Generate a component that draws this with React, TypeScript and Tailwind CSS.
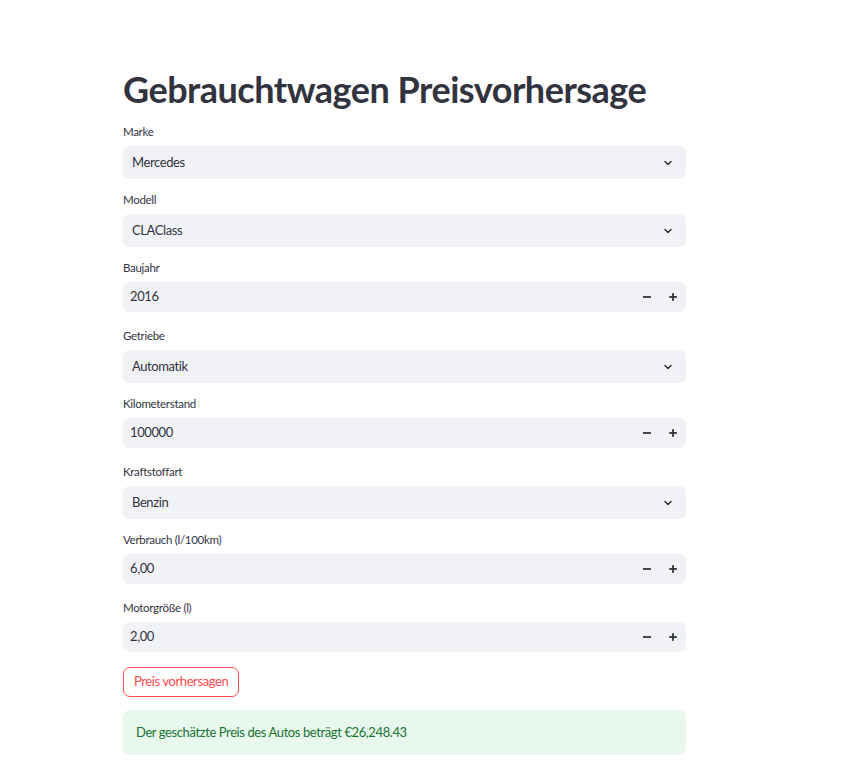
import React from "react";

const font = { fontFamily: "Lato, 'Noto Sans', 'Liberation Sans', sans-serif" };

function Chevron() {
  return (
    <svg width="12" height="12" viewBox="0 0 24 24" fill="none" stroke="#31333F" strokeWidth="3.2" strokeLinecap="round" strokeLinejoin="round">
      <path d="M6 9l6 6 6-6" />
    </svg>
  );
}

function SelectBox({ label, value }: { label: string; value: string }) {
  return (
    <div className="flex flex-col">
      <div className="h-[16px] text-[11.5px] leading-[16px] tracking-[-0.3px] text-[#31333F]">{label}</div>
      <div className="mt-[6px] h-[33px] rounded-[7px] bg-[#F0F2F6] flex items-center justify-between pl-[9px] pr-[12px]">
        <span className="text-[13px] tracking-[-0.4px] text-[#31333F]">{value}</span>
        <Chevron />
      </div>
    </div>
  );
}

function NumberBox({ label, value }: { label: string; value: string }) {
  return (
    <div className="flex flex-col">
      <div className="h-[16px] text-[11.5px] leading-[16px] tracking-[-0.3px] text-[#31333F]">{label}</div>
      <div className="mt-[6px] h-[33px]">
        <div className="h-[30px] rounded-[7px] bg-[#F0F2F6] flex items-center justify-between pl-[7px]">
          <span className="text-[13px] tracking-[-0.4px] text-[#31333F]">{value}</span>
          <div className="flex items-center h-full">
            <div className="w-[26px] h-full flex items-center justify-center">
              <svg width="10" height="10" viewBox="0 0 10 10"><rect x="1" y="4.1" width="8" height="1.8" fill="#31333F" /></svg>
            </div>
            <div className="w-[26px] h-full flex items-center justify-center">
              <svg width="10" height="10" viewBox="0 0 10 10"><rect x="1.2" y="4.1" width="7.6" height="1.8" fill="#31333F" /><rect x="4.1" y="1.2" width="1.8" height="7.6" fill="#31333F" /></svg>
            </div>
          </div>
        </div>
      </div>
    </div>
  );
}

export default function App() {
  return (
    <div className="min-h-[770px] w-[845px] bg-white" style={font}>
      <div className="pl-[123px] pt-[66px] w-[686px]">
        <h1 className="text-[36px] leading-[46px] font-bold text-[#31333F] tracking-[-0.5px]">Gebrauchtwagen Preisvorhersage</h1>
        <div className="mt-[12px] flex flex-col gap-[13px]">
          <SelectBox label="Marke" value="Mercedes" />
          <SelectBox label="Modell" value="CLAClass" />
          <NumberBox label="Baujahr" value="2016" />
          <SelectBox label="Getriebe" value="Automatik" />
          <NumberBox label="Kilometerstand" value="100000" />
          <SelectBox label="Kraftstoffart" value="Benzin" />
          <NumberBox label="Verbrauch (l/100km)" value="6,00" />
          <NumberBox label="Motorgröße (l)" value="2,00" />
        </div>
        <div className="mt-[12px]">
          <button className="h-[30px] px-[10px] rounded-[7px] border border-[#FF4B4B] bg-white text-[13px] tracking-[-0.4px] text-[#FF4B4B]">Preis vorhersagen</button>
        </div>
        <div className="mt-[13px] h-[45px] rounded-[7px] bg-[#E8F8EC] flex items-center pl-[13px] text-[13px] tracking-[-0.4px] text-[#177233]">
          Der geschätzte Preis des Autos beträgt €26,248.43
        </div>
      </div>
    </div>
  );
}
